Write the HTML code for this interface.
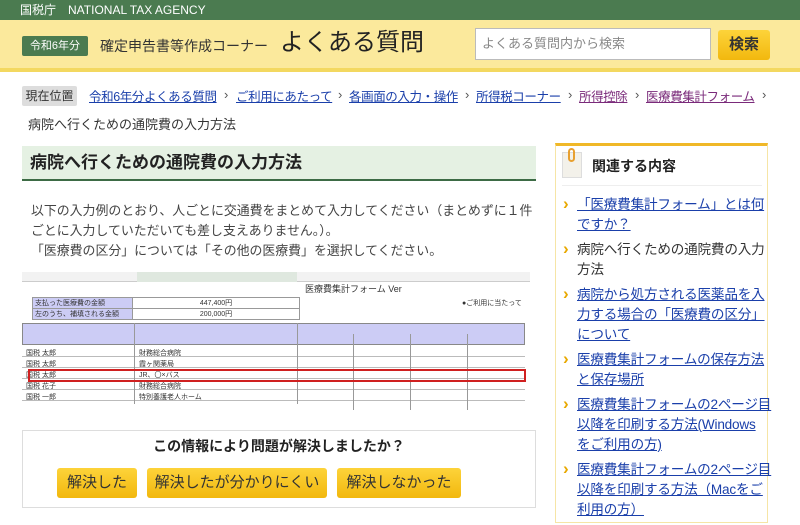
<!DOCTYPE html>
<html><head><meta charset="utf-8"><style>
*{margin:0;padding:0;box-sizing:border-box}
body{width:800px;height:515px;overflow:hidden;background:#fff;font-family:"Liberation Sans","Noto Sans CJK JP",sans-serif;color:#333;position:relative}
.a{position:absolute;white-space:nowrap}
a{color:#1a3faa;text-decoration:underline}
.top{left:0;top:0;width:800px;height:20px;background:#4b7b50;color:#fff;font-size:12px;line-height:20px;padding-left:20px}
.hdr{left:0;top:20px;width:800px;height:52px;background:#fbe99c;border-bottom:4px solid #f3d860}
.bc{top:88px;font-size:12.5px;line-height:18px;letter-spacing:-0.4px}
.sep{top:87px;font-size:13px;color:#555}
td{border:1px solid #999;font-size:7px;padding:0 2px;height:10px}
.btn{position:absolute;top:468px;height:30px;background:linear-gradient(#fdd33a,#f2b80e);border-radius:3px;font-size:15px;line-height:30px;text-align:center;color:#333}
.side li{list-style:none;position:relative;padding-left:22px;font-size:13.6px;line-height:20px;margin-bottom:5px;white-space:nowrap;letter-spacing:-0.2px}
.side li:before{content:"›";position:absolute;left:8px;top:-1px;color:#e8a800;font-weight:bold;font-size:17px}
.vl{position:absolute;top:55px;height:81px;border-left:1px solid #999}
</style></head><body>
<div class="a top">国税庁　NATIONAL TAX AGENCY</div>
<div class="a hdr"></div>
<div class="a" style="left:22px;top:36px;width:66px;height:20px;background:#4b7b50;border-radius:2px;color:#fff;font-size:11px;line-height:20px;text-align:center">令和6年分</div>
<div class="a" style="left:100px;top:36px;font-size:14px;line-height:20px;color:#333">確定申告書等作成コーナー</div>
<div class="a" style="left:280px;top:28px;font-size:24px;line-height:30px;color:#222">よくある質問</div>
<div class="a" style="left:475px;top:28px;width:236px;height:32px;background:#fff;border:1px solid #bbb;font-size:13px;line-height:30px;padding-left:6px;color:#888">よくある質問内から検索</div>
<div class="a" style="left:718px;top:30px;width:52px;height:30px;background:linear-gradient(#fdd33a,#f2b80e);border-radius:3px;font-size:15px;line-height:30px;text-align:center;font-weight:bold;color:#333">検索</div>

<div class="a" style="left:22px;top:86px;width:55px;height:20px;background:#ddd;border-radius:2px;font-size:12px;line-height:20px;text-align:center">現在位置</div>
<a class="a bc" style="left:89px">令和6年分よくある質問</a>
<span class="a sep" style="left:224px">›</span>
<a class="a bc" style="left:236px">ご利用にあたって</a>
<span class="a sep" style="left:338px">›</span>
<a class="a bc" style="left:349px">各画面の入力・操作</a>
<span class="a sep" style="left:465px">›</span>
<a class="a bc" style="left:476px">所得税コーナー</a>
<span class="a sep" style="left:568px">›</span>
<a class="a bc" style="left:579px;color:#7a2a7a">所得控除</a>
<span class="a sep" style="left:635px">›</span>
<a class="a bc" style="left:646px;color:#7a2a7a">医療費集計フォーム</a>
<span class="a sep" style="left:762px">›</span>
<div class="a" style="left:28px;top:116px;font-size:13px;line-height:18px">病院へ行くための通院費の入力方法</div>

<div class="a" style="left:22px;top:146px;width:514px;height:35px;background:#e5f1e3;border-bottom:2px solid #3d6b45;font-size:17px;font-weight:bold;line-height:33px;padding-left:8px;color:#222">病院へ行くための通院費の入力方法</div>
<div class="a" style="left:31px;top:201px;font-size:12.9px;line-height:20px;color:#444">以下の入力例のとおり、人ごとに交通費をまとめて入力してください（まとめずに１件<br>ごとに入力していただいても差し支えありません。）。<br>「医療費の区分」については「その他の医療費」を選択してください。</div>

<div class="a" style="left:22px;top:268px;width:508px;height:142px;background:#fff;overflow:hidden">
<div style="position:absolute;left:0;top:4px;width:508px;height:10px;background:#f2f2f2;border-bottom:1px solid #ccc"></div>
<div style="position:absolute;left:115px;top:4px;width:160px;height:10px;background:#dfe8df"></div>
<div style="position:absolute;left:283px;top:14px;font-size:9px;color:#333">医療費集計フォーム Ver</div>
<table style="position:absolute;left:10px;top:29px;border-collapse:collapse;width:268px"><tr><td style="background:#ccccf5;width:100px">支払った医療費の金額</td><td style="text-align:center">447,400円</td></tr><tr><td style="background:#ccccf5">左のうち、補填される金額</td><td style="text-align:center">200,000円</td></tr></table>
<div style="position:absolute;left:440px;top:30px;font-size:7px">●ご利用に当たって</div>
<div style="position:absolute;left:0;top:55px;width:503px;height:22px;background:#ccccf5;border:1px solid #888"></div>
<div style="position:absolute;left:0;top:78px;width:503px;height:58px;background:repeating-linear-gradient(#fff 0 10px,#bbb 10px 11px)"></div>
<div class="vl" style="left:112px"></div><div class="vl" style="left:275px"></div><div class="vl" style="left:331px;top:66px"></div><div class="vl" style="left:388px;top:66px"></div><div class="vl" style="left:445px;top:66px"></div>
<div style="position:absolute;left:4px;top:80px;font-size:7px;line-height:11px">国税 太郎<br>国税 太郎<br>国税 太郎<br>国税 花子<br>国税 一郎</div>
<div style="position:absolute;left:117px;top:80px;font-size:7px;line-height:11px">財務総合病院<br>霞ヶ関薬局<br>JR、〇×バス<br>財務総合病院<br>特別養護老人ホーム</div>
<div style="position:absolute;left:6px;top:101px;width:498px;height:13px;border:2px solid #d02020"></div>
</div>

<div class="a" style="left:22px;top:430px;width:514px;height:78px;border:1px solid #ddd"></div>
<div class="a" style="left:22px;top:436px;width:514px;text-align:center;font-size:14px;font-weight:bold;color:#222">この情報により問題が解決しましたか？</div>
<div class="btn" style="left:57px;width:80px">解決した</div>
<div class="btn" style="left:147px;width:180px">解決したが分かりにくい</div>
<div class="btn" style="left:337px;width:124px">解決しなかった</div>

<div class="a" style="left:555px;top:143px;width:213px;height:380px;border:1px solid #f6e5a6;border-top:3px solid #f0b828"></div>
<div class="a" style="left:562px;top:152px;width:20px;height:26px;background:#f3f1ea;border:1px solid #ddd"></div>
<div class="a" style="left:568px;top:148px;width:7px;height:14px;border:2px solid #e8a030;border-radius:4px"></div>
<div class="a" style="left:592px;top:156px;font-size:14px;font-weight:bold;color:#222">関連する内容</div>
<div class="a" style="left:562px;top:185px;width:200px;border-top:1px solid #eee"></div>
<ul class="a side" style="left:555px;top:195px;width:213px">
<li><a>「医療費集計フォーム」とは何<br>ですか？</a></li>
<li>病院へ行くための通院費の入力<br>方法</li>
<li><a>病院から処方される医薬品を入<br>力する場合の「医療費の区分」<br>について</a></li>
<li><a>医療費集計フォームの保存方法<br>と保存場所</a></li>
<li><a>医療費集計フォームの2ページ目<br>以降を印刷する方法(Windows<br>をご利用の方)</a></li>
<li><a>医療費集計フォームの2ページ目<br>以降を印刷する方法（Macをご<br>利用の方）</a></li>
</ul>
</body></html>
